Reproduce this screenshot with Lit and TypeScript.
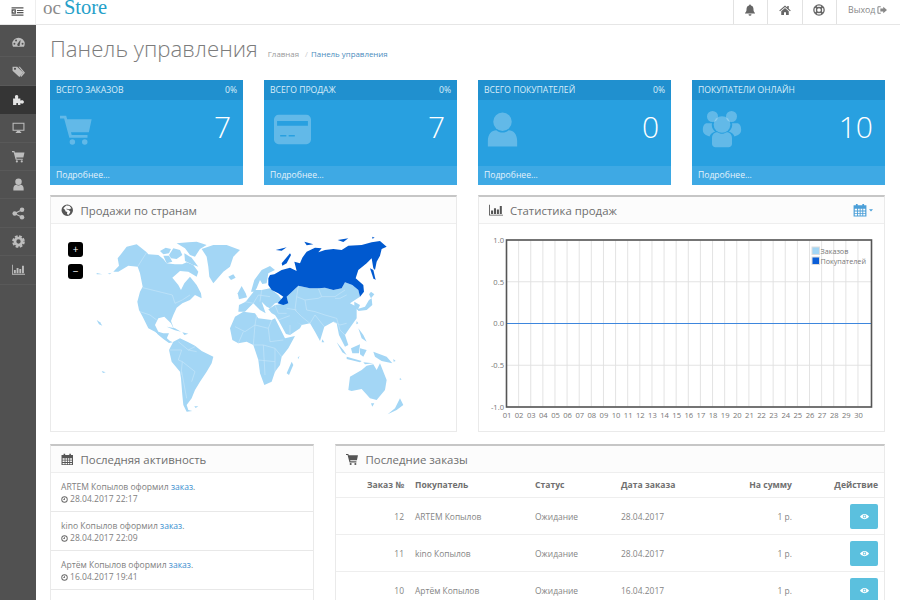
import { LitElement, html, css, svg } from "lit";
import { customElement } from "lit/decorators.js";

const ICONS: Record<string, any> = {
  indent: svg`<path d="M1 4h22v2.500H1zM1 17.500h22V20H1zM11 9h12v2H11zM11 13h12v2H11zM1 8h8v8H1z"/><path d="M2.800 12l3.400-2.600v5.200z" fill="#fff"/>`,
  gauge: svg`<path fill-rule="evenodd" d="M12 3A11.500 11.500 0 0 0 .5 14.500c0 2.200.6 4 1.500 5.500h20c.9-1.500 1.500-3.300 1.500-5.500A11.500 11.500 0 0 0 12 3zM4.500 16a1.800 1.800 0 1 1 0-3.600 1.800 1.800 0 0 1 0 3.600zM7.500 10a1.800 1.800 0 1 1 0-3.600 1.800 1.800 0 0 1 0 3.600zm5.300 8.400a2.500 2.500 0 0 1-2.800-3.600L15 8l1 .4-1.700 6.600a2.500 2.500 0 0 1-1.500 3.400zM19.500 16a1.800 1.800 0 1 1 0-3.600 1.800 1.800 0 0 1 0 3.600z"/>`,
  tags: svg`<path fill-rule="evenodd" d="M1 3h8.500L21 14.500 13.500 22 1 10.500zM5.500 9a2 2 0 1 0 0-4 2 2 0 0 0 0 4z"/><path d="M12 3h2.500L24 14.500 17 22l-1.500-1.500 5.500-6z"/>`,
  puzzle: svg`<path d="M2 10h3.500c.6 0 .8-.5.400-1C4.700 7 5.500 3.500 8.500 3.500s3.800 3.500 2.600 5.500c-.4.500-.2 1 .4 1H15.500v3.500c0 .6.500.8 1 .4 2-1.200 5.500-.4 5.500 2.600s-3.500 3.800-5.500 2.600c-.5-.4-1-.2-1 .4V22h-4.500v-2.500c0-1.200-3-1.200-3 0V22H2z"/>`,
  desktop: svg`<path fill-rule="evenodd" d="M1 3h22v15H1zm2 2v11h18V5z"/><path d="M9 18h6l.5 2.500H17V22H7v-1.500h1.500z"/>`,
  cart: svg`<path d="M0 2h4.500l.7 2.500H23l-2 9.500H8l.5 2H20v2H6.800L3 4H0z"/><circle cx="9" cy="21" r="2"/><circle cx="18" cy="21" r="2"/>`,
  card: svg`<path fill-rule="evenodd" d="M3 2.500h18a3 3 0 0 1 3 3v13a3 3 0 0 1-3 3H3a3 3 0 0 1-3-3v-13a3 3 0 0 1 3-3zM2 6.500v3h20v-3zm2 9v1h4v-1zm5.500 0v1h4v-1z"/>`,
  user: svg`<circle cx="12" cy="7" r="6"/><path d="M2.500 23v-3.500C2.500 15 5 12.500 8 12.500c1 1 2.500 1.500 4 1.500s3-.5 4-1.500c3 0 5.500 2.500 5.500 7V23z"/>`,
  users: svg`<circle cx="6.300" cy="4.500" r="3.300"/><circle cx="17.700" cy="4.500" r="3.300"/><path d="M.5 12.500C.5 10 1.500 8.500 3 8.500h3c-.5 2 .5 4 2 5-1.500.3-3 1.500-3.500 3C2.500 16 .5 15 .5 12.500zM23.500 12.500c0-2.500-1-4-2.500-4h-3c.5 2-.5 4-2 5 1.500.3 3 1.500 3.500 3 2-.5 4-1.500 4-4z"/><circle cx="12" cy="9.300" r="5"/><path d="M6 21v-3.500c0-2.500 1.800-3.500 3.200-3.500.8.500 1.800.9 2.800.9s2-.4 2.800-.9c1.400 0 3.200 1 3.200 3.500V21c0 1-1 2-2 2H8c-1 0-2-1-2-2z"/>`,
  bell: svg`<path d="M12 1a1.800 1.800 0 0 1 1.800 2c3.700.8 5.200 3.800 5.200 8 0 3.500 1 5 3 7v1H2v-1c2-2 3-3.500 3-7 0-4.200 1.500-7.200 5.200-8A1.800 1.800 0 0 1 12 1zM9 20.500h6a3 3 0 0 1-6 0z"/>`,
  home: svg`<path d="M12 3 .5 13l1.500 1.700L12 6l10 8.700 1.500-1.700-4-3.500V4h-3v3zM4.500 14.500V22H10v-5.500h4V22h5.500v-7.500L12 8z"/>`,
  buoy: svg`<g fill="none" stroke="currentColor"><circle cx="12" cy="12" r="10.300" stroke-width="2.600"/><circle cx="12" cy="12" r="5" stroke-width="2.600"/><path d="M5 5l3.500 3.500M19 5l-3.500 3.500M5 19l3.500-3.500M19 19l-3.500-3.500" stroke-width="4.500"/></g>`,
  signout: svg`<path d="M9 3H3.500A2.500 2.500 0 0 0 1 5.500v13A2.500 2.500 0 0 0 3.500 21H9v-2.500H3.500v-13H9z"/><path d="M15 4l9 8-9 8v-4.500H8v-7h7z"/>`,
  globe: svg`<path fill-rule="evenodd" d="M12 1a11 11 0 1 1 0 22 11 11 0 0 1 0-22zM4.500 8l3 3 1.500 3.500 3 1-.5 3.500 2.500 2 3-3.500 1-3-4-3.500-3-.5-.5-2 2.500 1 3 .5L20 8 16 3.500 10 3 8 5z"/>`,
  chart: svg`<path d="M0 3h1.500v17H24v1.500H0z"/><path d="M3.500 13H7v6H3.500zM8.500 9H12v10H8.500zM13.500 11h3.500v8h-3.500zM18.500 5H22v14h-3.500z"/>`,
  calendar: svg`<path fill-rule="evenodd" d="M1 4h4V1.500h3V4h8V1.500h3V4h4v19H1zm2 6v3h4v-3zm5.500 0v3h3v-3zm4.500 0v3h3v-3zm4.500 0v3H21v-3zM3 14.500v3h4v-3zm5.500 0v3h3v-3zm4.500 0v3h3v-3zm4.500 0v3H21v-3zM3 19v2.500h4V19zm5.500 0v2.500h3V19zm4.500 0v2.500h3V19zm4.500 0v2.500H21V19z"/>`,
  caret: svg`<path d="M4 9h16l-8 9z"/>`,
  clock: svg`<path fill-rule="evenodd" d="M12 1a11 11 0 1 1 0 22 11 11 0 0 1 0-22zm0 3a8 8 0 1 0 0 16 8 8 0 0 0 0-16zM11 7h2.500v6.500H7.500V11H11z"/>`,
  eye: svg`<path fill-rule="evenodd" d="M12 5c6 0 10 4 12 7-2 3-6 7-12 7S2 15 0 12c2-3 6-7 12-7zm0 2.500a4.500 4.500 0 1 0 0 9 4.500 4.500 0 0 0 0-9z"/><circle cx="12" cy="12" r="2.500"/>`,
  cog: svg`<circle cx="12" cy="12" r="6.500" fill="none" stroke="currentColor" stroke-width="5"/><circle cx="12" cy="12" r="10" fill="none" stroke="currentColor" stroke-width="3.500" stroke-dasharray="5 2.850"/>`,
  share: svg`<circle cx="18.500" cy="5" r="4.200"/><circle cx="18.500" cy="19" r="4.200"/><circle cx="5" cy="12" r="4.200"/><path d="M5 12 18.500 5M5 12l13.500 7" stroke="currentColor" stroke-width="2.200"/>`,
};

const icon = (name: string, cls = "") =>
  html`<svg class="ic ${cls}" viewBox="0 0 24 24" fill="currentColor" aria-hidden="true">${ICONS[name]}</svg>`;

/* Map shapes are traced in three local frames, each placed by a translate + 1/3 scale. */
const AMERICAS = {
  fill: [
    "M70,110 L55,110 L72,92 L68,70 L80,55 L95,35 L125,28 L155,52 L160,58 L190,60 L205,72 L215,85 L240,88 L262,88 L275,82 L295,90 L310,110 L305,125 L280,110 L255,108 L232,128 L250,150 L258,165 L268,145 L285,125 L305,150 L318,175 L320,190 L300,180 L285,195 L262,205 L245,218 L235,240 L228,258 L238,285 L228,265 L208,245 L190,250 L180,270 L190,290 L205,295 L222,295 L213,315 L200,305 L180,290 L160,280 L143,245 L132,225 L127,200 L135,170 L143,155 L135,115 L128,95 L100,92 Z",
    "M180,285 L205,300 L225,318 L234,322 L222,324 L205,312 L188,298 Z",
    "M195,48 L212,38 L228,42 L222,55 L205,58 Z",
    "M235,40 L255,45 L262,60 L245,72 L228,70 L222,60 Z",
    "M205,62 L222,62 L232,80 L215,85 Z",
    "M245,25 L280,22 L305,20 L335,30 L315,42 L300,65 L285,60 L270,40 Z",
    "M268,55 L290,68 L310,95 L290,88 L270,78 Z",
    "M320,42 L355,30 L395,30 L435,45 L415,65 L405,95 L385,110 L355,145 L343,125 L340,95 L335,65 Z",
    "M400,125 L415,118 L422,128 L408,135 Z",
    "M5,255 L15,262 L22,272 L12,268 Z",
    "M215,275 L240,280 L258,290 L240,286 Z",
    "M262,292 L280,296 L268,300 Z",
    "M5,114 L22,118 L5,118 Z",
    "M38,116 L50,113 L44,118 Z",
    "M20,408 L32,412 L24,414 Z",
    "M222,345 L235,320 L255,310 L280,322 L300,332 L320,348 L355,365 L350,385 L335,410 L315,440 L300,465 L290,490 L275,510 L280,525 L292,528 L275,530 L265,510 L262,480 L258,430 L255,410 L230,380 Z",
    "M298,514 L310,514 L302,519 Z",
  ],
  lines: [
    "M155,52 L128,95",
    "M143,158 L232,180 L240,205 L262,195 L285,180",
    "M135,230 L165,240 L185,255",
    "M222,345 L260,345 L250,375 L262,380 L300,410 L290,440",
    "M260,410 L275,490",
    "M300,335 L280,345 L250,320",
    "M262,380 L258,420",
    "M305,350 L280,345",
  ],
};

const EURAFRICA = {
  fill: [
    "M38,100 L50,78 L62,100 L66,112 L42,118 Z",
    "M78,95 L88,60 L110,30 L135,18 L150,30 L130,40 L125,70 L112,72 L105,60 L95,85 L88,95 Z",
    "M40,155 L42,135 L62,125 L78,105 L90,90 L110,90 L135,85 L160,105 L175,125 L150,130 L135,145 L125,140 L110,125 L122,160 L105,150 L85,130 L70,145 L60,155 Z",
    "M130,148 L150,135 L185,130 L205,150 L215,185 L230,195 L225,205 L195,225 L183,222 L160,180 L150,165 L140,160 Z",
    "M15,205 L30,170 L55,155 L90,160 L100,175 L140,180 L150,175 L180,235 L210,228 L190,265 L170,290 L165,315 L150,335 L140,365 L118,375 L105,340 L100,300 L85,255 L65,245 L40,250 L22,240 Z",
    "M200,305 L205,315 L192,345 L185,340 Z",
  ],
  lines: [
    "M30,200 L60,215 L90,195 L130,205 L135,245 L175,240",
    "M95,165 L90,195 L85,255",
    "M130,205 L140,180",
    "M85,255 L115,255 L150,265 L170,290",
    "M100,300 L150,305",
    "M115,255 L120,345",
    "M150,265 L150,335",
    "M55,215 L40,250",
    "M60,125 L85,130 L100,105 L135,110",
    "M110,90 L105,125",
    "M160,180 L200,165 L205,150",
    "M195,225 L195,195",
    "M150,135 L160,160 L185,160",
  ],
};

const ASIA = {
  fill: [
    "M50,210 L55,210 L70,205 L65,185 L100,152 L135,160 L160,160 L180,158 L205,165 L230,160 L240,142 L262,150 L280,165 L285,185 L270,195 L255,205 L275,215 L275,250 L250,285 L240,300 L250,330 L240,335 L222,300 L215,265 L205,260 L178,275 L165,318 L150,290 L135,265 L110,270 L80,255 L70,232 L45,220 Z",
    "M320,190 L322,210 L305,225 L280,228 L278,222 L300,215 L312,195 Z",
    "M318,170 L328,178 L318,190 L312,178 Z",
    "M268,200 L285,210 L278,226 L268,215 Z",
    "M280,280 L295,300 L305,320 L290,310 L285,295 Z",
    "M215,322 L235,345 L245,360 L232,352 Z",
    "M258,340 L285,328 L282,355 L262,355 Z",
    "M245,365 L290,378 L285,382 L245,372 Z",
    "M285,340 L305,345 L295,365 L285,358 Z",
    "M325,350 L365,365 L382,385 L350,378 L330,365 Z",
    "M295,382 L325,385 L300,388 Z",
    "M275,258 L280,265 L274,268 Z",
    "M172,313 L178,322 L170,322 Z",
    "M250,465 L255,425 L290,405 L305,392 L325,388 L335,405 L345,385 L365,435 L360,465 L335,495 L315,490 L290,462 L260,468 Z",
    "M318,505 L328,505 L322,515 Z",
    "M405,490 L415,510 L395,525 L368,538 L390,520 Z",
    "M385,372 L392,378 L386,380 Z",
    "M405,428 L410,434 L404,434 Z",
    "M98,368 L104,362 L100,372 Z",
  ],
  lines: [
    "M100,152 L95,185 L120,195 L160,190 L170,185 L210,185 L240,165",
    "M160,160 L170,185",
    "M245,180 L225,190 L210,190",
    "M150,230 L180,240 L215,250",
    "M135,265 L150,240 L178,275",
    "M95,185 L90,225 L110,245 L135,265",
    "M120,195 L125,225 L150,230",
    "M215,250 L225,285 L240,300",
    "M205,260 L225,270 L245,265",
    "M65,220 L95,225",
  ],
  dark: [
    "M10,130 L15,120 L28,118 L50,105 L75,98 L95,108 L88,80 L105,85 L112,68 L125,50 L150,38 L170,40 L160,52 L180,45 L205,42 L230,45 L250,32 L290,30 L320,22 L345,18 L365,35 L350,42 L345,62 L335,80 L330,105 L325,100 L320,70 L305,85 L280,105 L272,130 L295,150 L297,170 L285,185 L280,165 L262,150 L240,142 L230,160 L205,165 L180,158 L160,160 L135,160 L100,152 L65,185 L70,205 L55,210 L38,205 L55,185 L40,175 L20,165 L10,150 Z",
    "M315,100 L325,105 L332,135 L325,130 Z",
    "M50,85 L75,55 L78,60 L65,85 L52,92 Z",
    "M32,45 L65,37 L50,47 Z",
    "M118,20 L145,28 L125,31 Z",
    "M218,15 L250,10 L235,21 Z",
    "M322,5 L329,8 L322,11 Z",
  ],
};

const mapGroup = (x: number, y: number, g: { fill: string[]; lines: string[]; dark?: string[] }) =>
  svg`<g transform="translate(${x} ${y}) scale(.3333)">
    ${g.fill.map(d => svg`<path d=${d} fill="#a3d6f5"/>`)}
    ${g.lines.map(d => svg`<path d=${d} fill="none" stroke="#cbe8fa" stroke-width="1.700"/>`)}
    ${(g.dark ?? []).map(d => svg`<path d=${d} fill="#0059cf"/>`)}
  </g>`;

const DAYS = Array.from({ length: 30 }, (_, i) => String(i + 1).padStart(2, "0"));
const X0 = 28.5, X1 = 393.5, Y0 = 16, Y1 = 183, STEP = 12.12;

const TILES = [
  { t: "Всего заказов", p: "0%", n: "7", i: "cart", c: "" },
  { t: "Всего продаж", p: "0%", n: "7", i: "card", c: "big" },
  { t: "Всего покупателей", p: "0%", n: "0", i: "user", c: "big shift" },
  { t: "Покупатели онлайн", p: "", n: "10", i: "users", c: "huge" },
];
const NAV = ["gauge", "tags", "puzzle", "desktop", "cart", "user", "share", "cog", "chart"];
const ACTIVITY = [
  ["ARTEM Копылов оформил ", "28.04.2017 22:17"],
  ["kino Копылов оформил ", "28.04.2017 22:09"],
  ["Артём Копылов оформил ", "16.04.2017 19:41"],
  ["Артём Копылов оформил ", "16.04.2017 19:40"],
];
const ORDERS = [
  ["12", "ARTEM Копылов", "Ожидание", "28.04.2017", "1 р."],
  ["11", "kino Копылов", "Ожидание", "28.04.2017", "1 р."],
  ["10", "Артём Копылов", "Ожидание", "16.04.2017", "1 р."],
];

@customElement("app-root")
export class AppRoot extends LitElement {
  static styles = css`
    :host { display: block; width: 900px; height: 600px; overflow: hidden; background: #fff;
      font-family: "Open Sans", "Liberation Sans", sans-serif; color: #777; }
    .ic { display: block; width: 13px; height: 13px; flex: none; }
    .top { display: flex; height: 25px; box-sizing: border-box; border-bottom: 1px solid #e6e6e6; }
    .toggle { width: 36px; box-sizing: border-box; border-right: 1px solid #eee; display: flex; align-items: center;
      justify-content: center; color: #555; padding-bottom: 2px; }
    .logo { margin-left: 7px; font-family: "Liberation Serif", serif; font-size: 19px; line-height: 15px; height: 24px;
      color: #8a8a8a; white-space: nowrap; }
    .logo b { font-weight: 400; font-size: 20.500px; color: #25a0c9; margin-left: 3px; }
    .spacer { flex: 1; }
    .cell { width: 34.500px; box-sizing: border-box; border-left: 1px solid #e2e2e2; display: flex; align-items: center;
      justify-content: center; color: #666; padding-bottom: 5px; }
    .cell.out { width: 64px; font-size: 8.800px; color: #888; gap: 2px; justify-content: flex-start; padding-left: 11px; }
    .cell .ic { width: 12px; height: 12px; }
    .cell.out .ic { width: 10px; height: 10px; }
    .main { display: flex; height: 575px; }
    .side { width: 36px; flex: none; box-sizing: border-box; background: #515151; padding-top: 4px; }
    .nav { height: 28.400px; display: flex; align-items: center; justify-content: center; color: #bdbdbd;
      border-bottom: 1px solid #595959; box-sizing: border-box; }
    .nav.on { background: #353535; color: #e4e4e4; border-color: #353535; }
    .content { flex: 1; min-width: 0; padding: 0 15px 0 14px; }
    .title { display: flex; align-items: baseline; height: 55px; padding-top: 7px; box-sizing: border-box; }
    h1 { margin: 0; font-size: 22.200px; line-height: 34px; font-weight: 300; color: #7c7c7c; }
    .crumb { margin-left: 10px; font-size: 7.900px; color: #999; }
    .crumb a { color: #4a8bbd; }
    .crumb i { font-style: normal; color: #ccc; margin: 0 3px 0 4px; }
    .tiles { display: grid; grid-template-columns: repeat(4, 193px); gap: 21px; }
    .tile { height: 105px; display: flex; flex-direction: column; color: #fff; background: #28a0e0; }
    .t-head { height: 20px; flex: none; background: #2090cf; display: flex; justify-content: space-between; align-items: center;
      padding: 0 6px; font-size: 8.600px; text-transform: uppercase; color: #d9edf9; }
    .t-body { flex: 1; display: flex; justify-content: space-between; align-items: center; padding: 0 12px 8px 10px; }
    .t-body .ic { width: 33px; height: 33px; color: rgba(255,255,255,.27); }
    .t-body .ic.big { width: 37px; height: 37px; }
    .t-body .ic.huge { width: 40px; height: 40px; }
    .t-body .ic.shift { margin-left: -4px; }
    .t-num { font-size: 30px; font-weight: 300; line-height: 1; margin-top: -4px; }
    .t-foot { height: 19px; flex: none; background: #3ea9e4; padding: 0 6px; font-size: 8.600px; line-height: 19px; color: #e3f2fb; }
    .row { display: grid; gap: 21px; margin-top: 10px; }
    .r1 { grid-template-columns: 407px 407px; }
    .r2 { grid-template-columns: 264px 550px; margin-top: 12px; }
    .panel { border: 1px solid #eaeaea; border-top: 2px solid #c6c6c6; box-sizing: border-box; background: #fff; }
    .r1 .panel { height: 237px; }
    .r2 .panel { height: 180px; }
    .p-head { height: 27px; box-sizing: border-box; background: #fcfcfc; border-bottom: 1px solid #eee; display: flex;
      align-items: center; padding: 0 10px; gap: 7px; font-size: 11.400px; color: #6f6f6f; }
    .p-head .ic { color: #555; width: 12.500px; height: 12.500px; }
    .p-head .ic.wide { width: 14px; height: 14px; }
    .p-head .cal { margin-left: auto; display: flex; gap: 1.500px; align-items: center; color: #4b9fd8; }
    .p-head .cal .ic { color: inherit; width: 14px; height: 14px; }
    .p-head .cal .ic + .ic { width: 6px; height: 6px; }
    .mapbody { position: relative; height: 207px; }
    .mapbody svg { display: block; width: 405px; height: 207px; }
    .zoom { position: absolute; left: 17px; width: 15px; height: 15px; border-radius: 3px; background: #000; color: #fff;
      font-size: 10px; line-height: 14px; text-align: center; }
    .z1 { top: 18px; }
    .z2 { top: 40px; }
    .chart { display: block; width: 405px; height: 207px; }
    .chart text { font-family: "Open Sans", sans-serif; font-size: 7.600px; fill: #777; }
    .chart text.lg { font-size: 7.200px; }
    .act { padding: 8px 10px 0; height: 39px; box-sizing: border-box; border-bottom: 1px solid #e8e8e8; font-size: 8.550px;
      line-height: 12px; color: #808080; }
    .act a { color: #3a8fd0; }
    .act div { display: flex; align-items: center; gap: 2px; }
    .act .ic { width: 7px; height: 7px; color: #666; }
    table { width: 100%; border-collapse: collapse; table-layout: fixed; font-size: 8.450px; color: #858585; }
    th { height: 24px; font-weight: 700; font-size: 8.600px; color: #6f6f6f; text-align: left; padding: 0 5px; border-bottom: 1px solid #eee; }
    td { height: 37px; box-sizing: border-box; padding: 0 5px; border-bottom: 1px solid #eee; }
    .r { text-align: right; }
    th.first, td.first { padding-right: 6px; }
    th.end, td.end { padding-right: 6px; }
    .btn { display: inline-flex; width: 28px; height: 25px; border-radius: 2px; background: #5bc0de; color: #fff; align-items: center;
      justify-content: center; vertical-align: middle; }
    .btn .ic { width: 9px; height: 9px; }
    .c1 { width: 74px; } .c2 { width: 120px; } .c3 { width: 86px; } .c4 { width: 90px; } .c5 { width: 91px; } .c6 { width: 87px; }
  `;

  render() {
    return html`
      <div class="top">
        <div class="toggle">${icon("indent")}</div>
        <div class="logo">oc<b>Store</b></div>
        <div class="spacer"></div>
        <div class="cell">${icon("bell")}</div>
        <div class="cell">${icon("home")}</div>
        <div class="cell">${icon("buoy")}</div>
        <div class="cell out">Выход ${icon("signout")}</div>
      </div>
      <div class="main">
        <div class="side">
          ${NAV.map((n, i) => html`<div class="nav ${i === 2 ? "on" : ""}">${icon(n)}</div>`)}
        </div>
        <div class="content">
          <div class="title">
            <h1>Панель управления</h1>
            <div class="crumb">Главная <i>/</i><a>Панель управления</a></div>
          </div>
          <div class="tiles">
            ${TILES.map(t => html`<div class="tile">
              <div class="t-head"><span>${t.t}</span><span>${t.p}</span></div>
              <div class="t-body">${icon(t.i, t.c)}<span class="t-num">${t.n}</span></div>
              <div class="t-foot">Подробнее...</div>
            </div>`)}
          </div>
          <div class="row r1">
            <div class="panel">
              <div class="p-head">${icon("globe")}<span>Продажи по странам</span></div>
              <div class="mapbody">
                <svg viewBox="51 224 405 207">
                  ${mapGroup(95, 235, AMERICAS)}
                  ${mapGroup(225, 260, EURAFRICA)}
                  ${mapGroup(265, 235, ASIA)}
                </svg>
                <div class="zoom z1">+</div>
                <div class="zoom z2">−</div>
              </div>
            </div>
            <div class="panel">
              <div class="p-head">${icon("chart", "wide")}<span>Статистика продаж</span>
                <span class="cal">${icon("calendar")}${icon("caret")}</span></div>
              ${this.chart()}
            </div>
          </div>
          <div class="row r2">
            <div class="panel">
              <div class="p-head">${icon("calendar")}<span>Последняя активность</span></div>
              ${ACTIVITY.map(a => html`<div class="act">${a[0]}<a>заказ</a>.<div>${icon("clock")}${a[1]}</div></div>`)}
            </div>
            <div class="panel">
              <div class="p-head">${icon("cart")}<span>Последние заказы</span></div>
              <table>
                <colgroup><col class="c1"><col class="c2"><col class="c3"><col class="c4"><col class="c5"><col class="c6"></colgroup>
                <tr><th class="r first">Заказ №</th><th>Покупатель</th><th>Статус</th><th>Дата заказа</th><th class="r">На сумму</th><th class="r end">Действие</th></tr>
                ${ORDERS.map(o => html`<tr><td class="r first">${o[0]}</td><td>${o[1]}</td><td>${o[2]}</td><td>${o[3]}</td><td class="r">${o[4]}</td>
                  <td class="r end"><span class="btn">${icon("eye")}</span></td></tr>`)}
              </table>
            </div>
          </div>
        </div>
      </div>
    `;
  }

  chart() {
    const ys = ["1.0", "0.5", "0.0", "-0.5", "-1.0"];
    const dy = (Y1 - Y0) / 4;
    return html`<svg class="chart" viewBox="1 0 405 207">
      ${DAYS.map((_, i) => {
        const x = X0 + i * STEP;
        return svg`<line x1=${x} x2=${x} y1=${Y0} y2=${Y1} stroke="#e0e0e0" stroke-width=".9"/>`;
      })}
      ${ys.map((_, i) => svg`<line x1=${X0} x2=${X1} y1=${Y0 + i * dy} y2=${Y0 + i * dy} stroke=${i === 2 ? "#3d86dd" : "#e0e0e0"} stroke-width=${i === 2 ? 1 : 0.9}/>`)}
      <rect x=${X0} y=${Y0} width=${X1 - X0} height=${Y1 - Y0} fill="none" stroke="#555" stroke-width="1.600"/>
      ${ys.map((t, i) => svg`<text x="26" y=${Y0 + i * dy + 2.800} text-anchor="end">${t}</text>`)}
      ${DAYS.map((t, i) => svg`<text x=${X0 + i * STEP + .5} y="193.500" text-anchor="middle">${t}</text>`)}
      <rect x="334" y="23" width="7.500" height="7.500" fill="#a3d6f5" stroke="#ddd" stroke-width="1"/>
      <rect x="334" y="33" width="7.500" height="7.500" fill="#0b5ed7" stroke="#ddd" stroke-width="1"/>
      <text class="lg" x="342.500" y="29.500">Заказов</text>
      <text class="lg" x="342.500" y="39.500">Покупателей</text>
    </svg>`;
  }
}
